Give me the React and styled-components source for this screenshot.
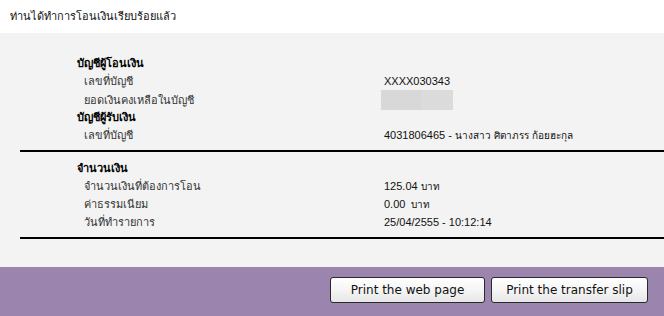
import styled, { createGlobalStyle } from "styled-components";

const GlobalStyle = createGlobalStyle`
    html, body {
        margin: 0;
        padding: 0;
        background: #ffffff;
    }

    body {
        font-family: Tahoma, "DejaVu Sans", "Noto Sans", sans-serif;
        font-size: 11px;
        color: #000;
    }
`;

const Page = styled.div`
    width: 664px;
    height: 316px;
    display: flex;
    flex-direction: column;
    overflow: hidden;
`;

const Header = styled.div`
    height: 33px;
    display: flex;
    align-items: center;
    padding-left: 10px;
    padding-bottom: 2px;
    box-sizing: border-box;
    font-size: 11px;
    color: #111;
`;

const Panel = styled.div`
    background: #f3f3f3;
    height: 234px;
    padding: 21px 0 0 20px;
    box-sizing: border-box;
`;

const Section = styled.div`
    border-bottom: 2px solid #000;
    padding: ${(p) => p.$pad || "0 0 6px 0"};
`;

const Row = styled.div`
    display: grid;
    grid-template-columns: 364px 1fr;
    height: 18px;
    align-items: center;
`;

const Heading = styled.div`
    padding-left: 57px;
    font-weight: bold;
    font-size: 11px;
`;

const Label = styled.div`
    padding-left: 64px;
    color: #333;
`;

const Value = styled.div`
    font-family: "Liberation Sans", Arial, sans-serif;
    font-size: 11px;
    color: #111;
`;

const Masked = styled.div`
    display: flex;
    width: 72px;
    height: 20px;
    margin-left: -3px;

    & span:first-child {
        width: 40px;
        background: #d8d8d8;
    }

    & span:last-child {
        flex: 1;
        background: #dbdbdb;
    }
`;

const Unit = styled.span`
    font-family: Tahoma, "DejaVu Sans", sans-serif;
    font-size: 10px;
    margin-left: ${(p) => p.$gap || 3}px;
`;

const Footer = styled.div`
    flex: 1;
    background: #9b84ae;
    display: flex;
    justify-content: flex-end;
    align-items: flex-start;
    gap: 6px;
    padding: 10px 16px 0 0;
`;

const Button = styled.button`
    width: ${(p) => p.$w}px;
    height: 26px;
    border: 1px solid #2a2a2a;
    border-radius: 3px;
    background: linear-gradient(#ffffff, #f4f4f4 55%, #e6e6e6);
    font-family: Verdana, "DejaVu Sans", sans-serif;
    font-size: 12px;
    color: #111;
    padding: 0;
    cursor: pointer;
`;

function App() {
    return (
        <>
            <GlobalStyle />
            <Page>
                <Header>ท่านได้ทำการโอนเงินเรียบร้อยแล้ว</Header>
                <Panel>
                    <Section>
                        <Row>
                            <Heading>บัญชีผู้โอนเงิน</Heading>
                        </Row>
                        <Row>
                            <Label>เลขที่บัญชี</Label>
                            <Value>XXXX030343</Value>
                        </Row>
                        <Row>
                            <Label>ยอดเงินคงเหลือในบัญชี</Label>
                            <Masked>
                                <span />
                                <span />
                            </Masked>
                        </Row>
                        <Row>
                            <Heading>บัญชีผู้รับเงิน</Heading>
                        </Row>
                        <Row>
                            <Label>เลขที่บัญชี</Label>
                            <Value>
                                4031806465 -
                                <Unit>นางสาว ศิตาภรร ก้อยฮะกุล</Unit>
                            </Value>
                        </Row>
                    </Section>
                    <Section $pad="7px 0 6px 0">
                        <Row>
                            <Heading>จำนวนเงิน</Heading>
                        </Row>
                        <Row>
                            <Label>จำนวนเงินที่ต้องการโอน</Label>
                            <Value>
                                125.04<Unit>บาท</Unit>
                            </Value>
                        </Row>
                        <Row>
                            <Label>ค่าธรรมเนียม</Label>
                            <Value>
                                0.00<Unit $gap={6}>บาท</Unit>
                            </Value>
                        </Row>
                        <Row>
                            <Label>วันที่ทำรายการ</Label>
                            <Value>25/04/2555 - 10:12:14</Value>
                        </Row>
                    </Section>
                </Panel>
                <Footer>
                    <Button $w={155}>Print the web page</Button>
                    <Button $w={157}>Print the transfer slip</Button>
                </Footer>
            </Page>
        </>
    );
}

export default App;
